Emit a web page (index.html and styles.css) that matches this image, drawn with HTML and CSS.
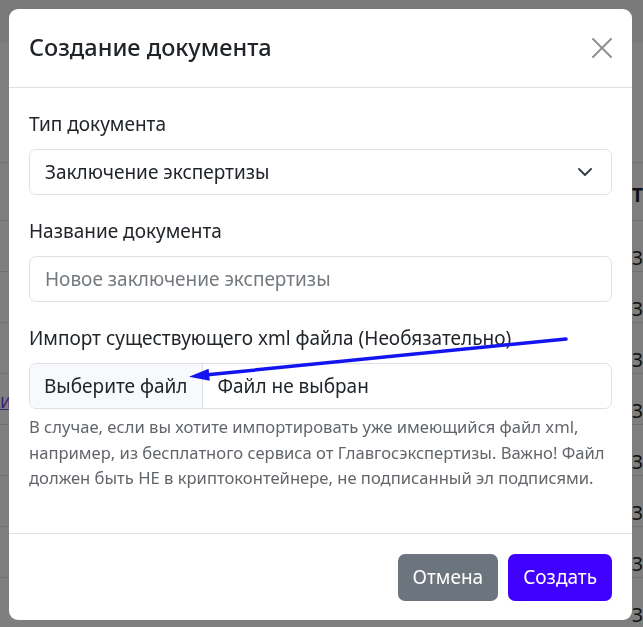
FILE: index.html
```html
<!DOCTYPE html>
<html>
<head>
  <title>Создание документа</title>
  <link rel="stylesheet" href="styles.css">
</head>
<body>
  <div class="navbar"></div>
  <div class="table">
    <div class="table-head"><span class="col-left"></span><span class="col-right">Т</span></div>
    <div class="table-row"><span class="col-left"></span><span class="col-right">З</span></div>
    <div class="table-row"><span class="col-left"></span><span class="col-right">З</span></div>
    <div class="table-row"><span class="col-left"></span><span class="col-right">З</span></div>
    <div class="table-row"><span class="col-left"><a href="#" class="doc-link">и</a></span><span class="col-right">З</span></div>
    <div class="table-row"><span class="col-left"></span><span class="col-right">З</span></div>
    <div class="table-row"><span class="col-left"></span><span class="col-right">З</span></div>
    <div class="table-row"><span class="col-left"></span><span class="col-right">З</span></div>
    <div class="table-row"><span class="col-left"></span><span class="col-right">З</span></div>
  </div>

  <div class="backdrop"></div>

  <div class="modal">
    <div class="modal-content">
      <div class="modal-header">
        <h5 class="modal-title">Создание документа</h5>
        <button class="btn-close" type="button">
          <svg width="20" height="20" viewBox="0 0 20 20">
            <path d="M1 1 L19 19 M19 1 L1 19" stroke="#8f9193" stroke-width="2" stroke-linecap="round"/>
          </svg>
        </button>
      </div>

      <div class="modal-body">
        <div class="form-group">
          <label class="form-label">Тип документа</label>
          <div class="form-select">
            <span>Заключение экспертизы</span>
            <svg width="14" height="8" viewBox="0 0 14 8">
              <path d="M1 1 L7 7 L13 1" fill="none" stroke="#343a40" stroke-width="1.8" stroke-linecap="round" stroke-linejoin="round"/>
            </svg>
          </div>
        </div>
        <div class="form-group">
          <label class="form-label" for="docName">Название документа</label>
          <input class="form-control" id="docName" type="text" placeholder="Новое заключение экспертизы">
        </div>
        <div class="form-group">
          <label class="form-label">Импорт существующего xml файла (Необязательно)</label>
          <div class="form-file">
            <span class="file-btn">Выберите файл</span>
            <span class="file-name">Файл не выбран</span>
          </div>
          <div class="form-text">
            В случае, если вы хотите импортировать уже имеющийся файл xml,<br>
            например, из бесплатного сервиса от Главгосэкспертизы. Важно! Файл<br>
            должен быть НЕ в криптоконтейнере, не подписанный эл подписями.
          </div>
        </div>
      </div>

      <div class="modal-footer">
        <button class="btn btn-secondary" type="button">Отмена</button>
        <button class="btn btn-primary" type="button">Создать</button>
      </div>

      <!-- стрелка-подсказка поверх формы -->
      <svg class="hint-arrow" width="623" height="611" viewBox="0 0 623 611">
        <line x1="557" y1="330" x2="196" y2="366" stroke="#1414f0" stroke-width="3.5" stroke-linecap="round"/>
        <polygon points="180,367.7 200.8,371.7 199.6,359.7" fill="#1414f0"/>
      </svg>
    </div>
  </div>
</body>
</html>
```

FILE: styles.css
```css
/* Общие стили */
body {
  margin: 0;
  height: 627px;
  overflow: hidden;
  font-family: "Noto Sans", "Open Sans", sans-serif;
  font-size: 19px;
  line-height: 1.5;
  color: #212529;
  background-color: #fff;
}

/* Страница под модальным окном */
.navbar {
  height: 43px;
  background-color: #f4f4f4;
}

.table {
  margin-top: 119px;
  border-top: 1px solid #dee2e6;
}

.table-head,
.table-row {
  display: flex;
  justify-content: space-between;
  border-bottom: 1px solid #dee2e6;
  box-sizing: border-box;
}

.table-head {
  height: 58px;
  padding-top: 18px;
  font-weight: 700;
}

.table-row {
  height: 51px;
  padding-top: 23px;
}

.col-left {
  width: 10px;
}

.col-right {
  width: 11px;
  overflow: hidden;
}

.doc-link {
  display: block;
  margin-top: -10px;
  color: #7a4cf0;
}

.backdrop {
  position: fixed;
  inset: 0;
  background-color: rgba(0, 0, 0, 0.5);
}

/* Модальное окно */
.modal {
  position: fixed;
  inset: 0;
  padding: 9px 11px 0 9px;
}

.modal-content {
  position: relative;
  background-color: #fff;
  border-radius: 9px;
  overflow: hidden;
}

.modal-header {
  display: flex;
  align-items: center;
  justify-content: space-between;
  height: 78px;
  padding: 0 20px 0 20px;
  border-bottom: 1px solid #dee2e6;
}

.modal-title {
  margin: 0;
  font-size: 23.5px;
  font-weight: 500;
  line-height: 1.5;
}

.btn-close {
  display: flex;
  padding: 0;
  border: none;
  background: none;
}

.modal-body {
  padding: 20px 20px 22px 20px;
}

.form-group {
  margin-bottom: 20px;
}

.form-label {
  display: block;
  padding-top: 2px;
  margin-bottom: 10px;
  line-height: 29px;
}

.form-select,
.form-control,
.form-file {
  box-sizing: border-box;
  width: 100%;
  height: 46px;
  border: 1px solid #dee2e6;
  border-radius: 7px;
  font: inherit;
  color: #212529;
}

.form-select {
  display: flex;
  align-items: center;
  justify-content: space-between;
  padding: 0 19px 0 15px;
}

.form-control {
  display: block;
  padding: 0 15px;
}

.form-control::placeholder {
  color: #74797e;
}

.form-file {
  display: flex;
  align-items: center;
  overflow: hidden;
}

.file-btn {
  display: flex;
  align-items: center;
  height: 100%;
  padding: 0 14px;
  background-color: #f8f9fa;
  border-right: 1px solid #dee2e6;
}

.file-name {
  padding-left: 15px;
}

.form-text {
  margin-top: 5px;
  font-size: 16.6px;
  line-height: 25.5px;
  color: #62666a;
}

.modal-footer {
  display: flex;
  justify-content: flex-end;
  gap: 10px;
  padding: 20px 20px 19px 20px;
  border-top: 1px solid #dee2e6;
}

.btn {
  height: 47px;
  padding: 0 14px;
  border: 1px solid transparent;
  border-radius: 7px;
  font: inherit;
  color: #fff;
}

.btn-secondary {
  background-color: #6c757d;
}

.btn-primary {
  background-color: #3f00ff;
}

.hint-arrow {
  position: absolute;
  left: 0;
  top: 0;
  pointer-events: none;
}
```
